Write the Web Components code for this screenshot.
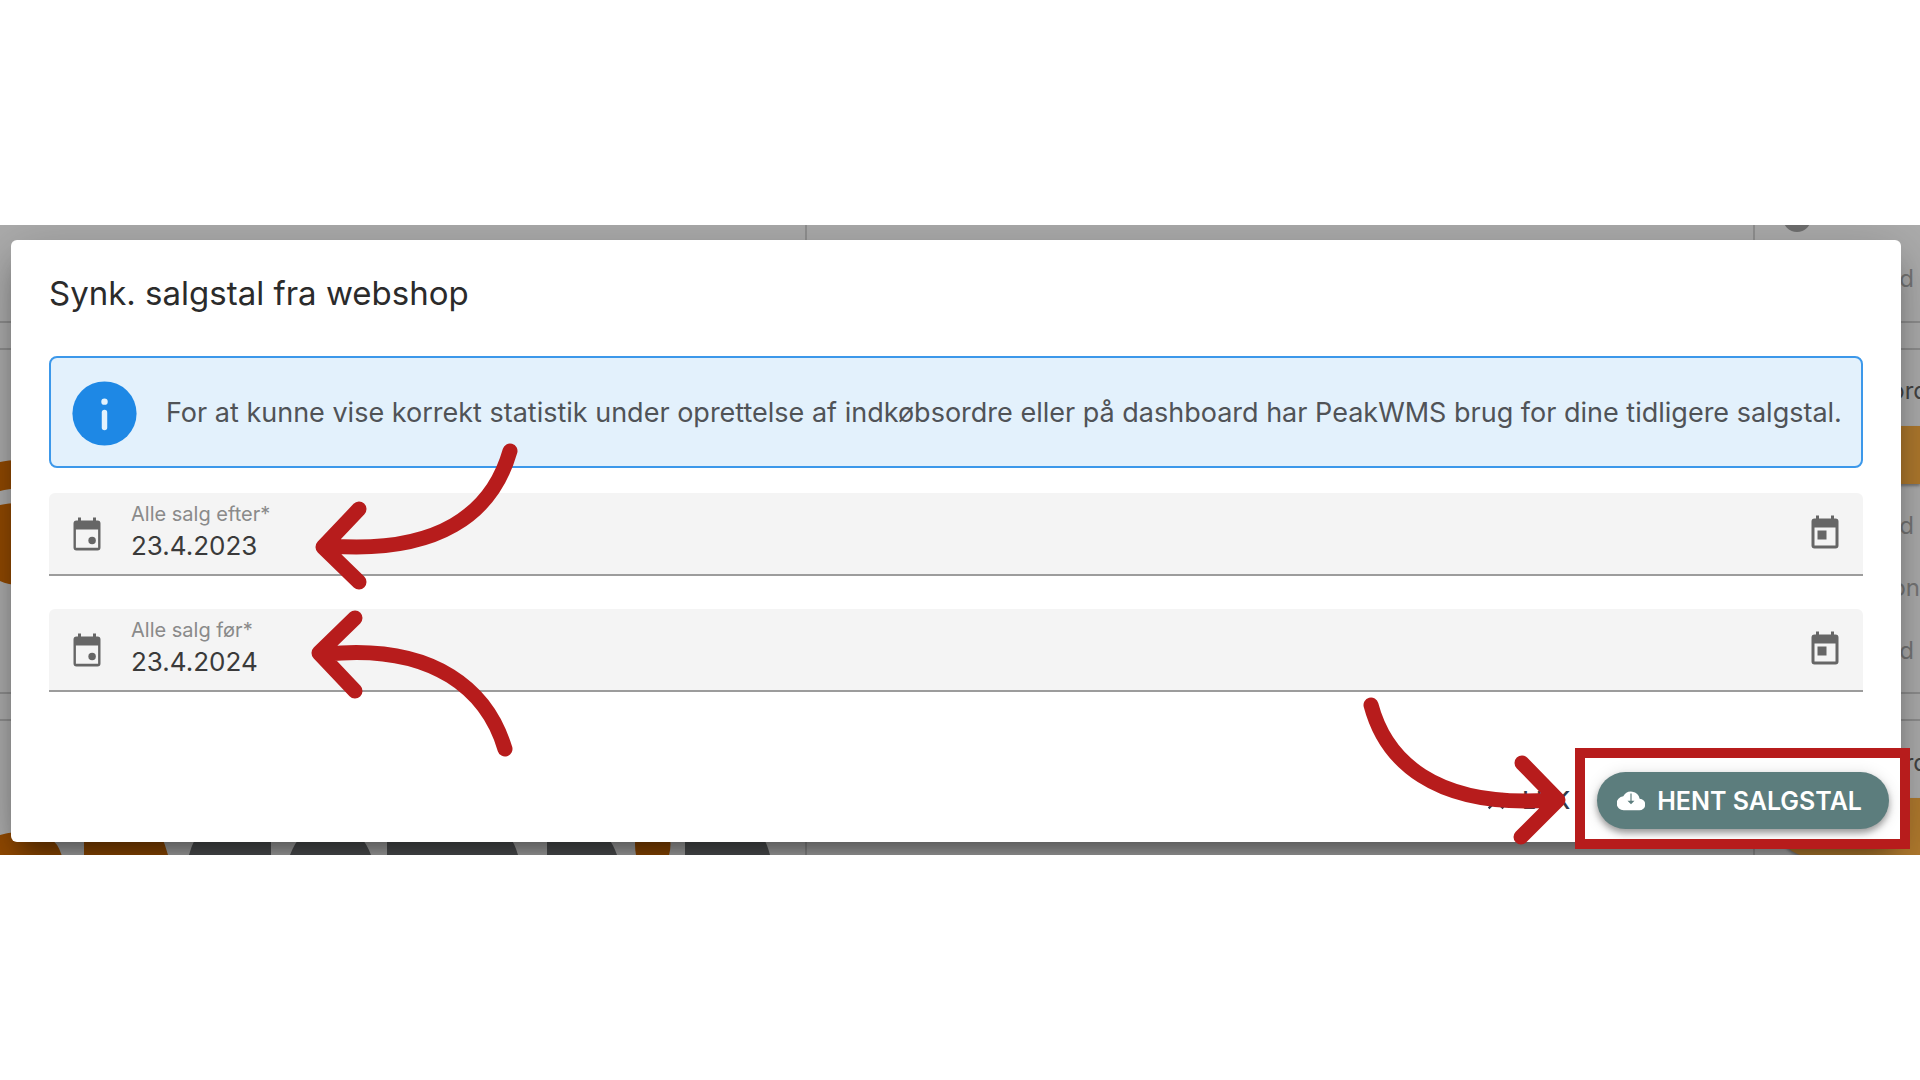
<!DOCTYPE html>
<html lang="da">
<head>
<meta charset="utf-8">
<title>Synk. salgstal fra webshop</title>
<style>
  body {
    margin: 0;
    min-height: 100vh;
    display: flex;
    flex-direction: column;
    justify-content: center;
    background: #fff;
    color: #2b2b2b;
    font-family: Inter, Roboto, sans-serif;
  }
</style>
</head>
<body>
<wms-stage>
  <wms-backdrop slot="backdrop"></wms-backdrop>
  <wms-dialog heading="Synk. salgstal fra webshop">
    <wms-alert>For at kunne vise korrekt statistik under oprettelse af indkøbsordre eller på dashboard har PeakWMS brug for dine tidligere salgstal.</wms-alert>
    <wms-date-field label="Alle salg efter*" value="23.4.2023"></wms-date-field>
    <wms-date-field label="Alle salg før*" value="23.4.2024"></wms-date-field>
    <wms-button slot="actions" variant="text" icon="close">LUK</wms-button>
    <wms-button slot="actions" variant="primary" icon="cloud" marked>HENT SALGSTAL</wms-button>
  </wms-dialog>
  <wms-arrow slot="notes" kind="efter"></wms-arrow>
  <wms-arrow slot="notes" kind="foer"></wms-arrow>
  <wms-arrow slot="notes" kind="hent"></wms-arrow>
</wms-stage>

<script>
const icons = {
  close: '<path d="M19 6.4 17.6 5 12 10.6 6.4 5 5 6.4l5.6 5.6L5 17.6 6.4 19l5.6-5.6 5.6 5.6 1.4-1.4-5.6-5.6z"/>',
  cloud: '<path fill-rule="evenodd" d="M19.4 10A7.5 7.5 0 0 0 5.4 8 6 6 0 0 0 6 20h13a5 5 0 0 0 .4-10zM11.5 5.5h1v6.3h2.5L12 14.8l-3-3h2.5z"/>',
  info: '<path d="M12 2a10 10 0 1 0 0 20 10 10 0 0 0 0-20z"/><path d="M12 11.7v4.7" fill="none" stroke="#e3f2fd" stroke-width="1.7" stroke-linecap="round"/><circle cx="12" cy="8.3" r="1" fill="#e3f2fd"/>',
  event: '<path fill-rule="evenodd" d="M6 1h2v2h8V1h2v2h1a2 2 0 0 1 2 2v16a2 2 0 0 1-2 2H5a2 2 0 0 1-2-2V5a2 2 0 0 1 2-2h1zM4.6 9v12.2h14.8V9z"/><circle cx="15.4" cy="16.3" r="2.5"/>',
  today: '<path fill-rule="evenodd" d="M6 1h2v2h8V1h2v2h1a2 2 0 0 1 2 2v16a2 2 0 0 1-2 2H5a2 2 0 0 1-2-2V5a2 2 0 0 1 2-2h1zM5 9v12h14V9z"/><path d="M7 11h6v6H7z"/>'
};

/**
 * Small fill icon, sized with the --size property.
 */
class WmsIcon extends HTMLElement {
  constructor() {
    super();
    this.attachShadow({ mode: 'open' });
  }

  connectedCallback() {
    this.shadowRoot.innerHTML = `
      <style>
        :host { display: block; flex: none; width: var(--size, 24px); height: var(--size, 24px); }
        svg { display: block; width: 100%; height: 100%; fill: currentColor; }
      </style>
      <svg viewBox="0 0 24 24" aria-hidden="true">${icons[this.getAttribute('name')]}</svg>
    `;
  }
}

/**
 * Holds the page behind, the dialog and the notes on top.
 */
class WmsStage extends HTMLElement {
  constructor() {
    super();
    this.attachShadow({ mode: 'open' }).innerHTML = `
      <style>
        :host { display: block; position: relative; }
        .clip { position: relative; overflow: hidden; padding: 15px 19px 13px 11px; background: #adadad; }
      </style>
      <div class="clip">
        <slot name="backdrop"></slot>
        <slot></slot>
      </div>
      <slot name="notes"></slot>
    `;
  }
}

/**
 * Dimmed dashboard that shows round the edges of the dialog.
 */
class WmsBackdrop extends HTMLElement {
  constructor() {
    super();
    this.attachShadow({ mode: 'open' }).innerHTML = `
      <style>
        :host { position: absolute; inset: 0; font-size: 24px; line-height: 32px; color: #777; }
        svg { position: absolute; left: 0; top: 0; width: 810px; height: 100%; }
        .side { position: absolute; top: 0; bottom: 0; right: 0; width: 165px; border-left: 2px solid #929292; }
        .rule { position: absolute; left: 0; right: 0; height: 25px; border: solid #8f8f8f; border-width: 2px 0; }
        .rule.one { top: 96px; }
        .rule.two { top: 467px; }
        .bar { position: absolute; left: 24px; right: 0; height: 58px; border-radius: 29px 0 0 29px; background: #b07a2e; box-shadow: 0 2px 3px #0005; }
        .dot { position: absolute; left: 28px; top: -21px; width: 28px; height: 28px; border-radius: 50%; background: #707070; }
        span { position: absolute; right: 6px; }
        .dark { color: #444; right: -8px; }
      </style>
      <div class="rule one"></div>
      <div class="rule two"></div>
      <svg aria-hidden="true">
        <g fill="#934a00">
          <path d="M0 237q8-2 20-2v28q-12 1-20 3z"/>
          <path d="M0 280q8-2 20-2v82q-12 0-20-4z"/>
          <path d="M0 610q56-14 63 26H0zM84 600h70q8 8 14 30H84z"/>
          <path d="M636 608h33q3 11 0 22h-33q-2-11 0-22z"/>
        </g>
        <g fill="#505254">
          <path d="M189 630q4-16 14-26h68v26zM290 630q10-26 28-26h28q17 4 25 26z"/>
          <path d="M387 604h62l13 12 14-12h22q14 4 20 26H387zM547 604h50q13 6 20 26h-70zM685 604h70q10 6 15 26h-85z"/>
        </g>
        <path d="M806 0v640" stroke="#929292" stroke-width="2"/>
      </svg>
      <div class="side">
        <div class="dot"></div>
        <div class="bar" style="top: 201px"></div>
        <div class="bar" style="top: 573px"></div>
        <span style="top: 38px">d</span>
        <span class="dark" style="top: 150px">ord</span>
        <span style="top: 285px">d</span>
        <span style="top: 347px; right: 0">on</span>
        <span style="top: 410px">d</span>
        <span class="dark" style="top: 522px">ord</span>
      </div>
    `;
  }
}

class WmsDialog extends HTMLElement {
  constructor() {
    super();
    this.attachShadow({ mode: 'open' });
  }

  connectedCallback() {
    this.shadowRoot.innerHTML = `
      <style>
        :host {
          display: block;
          position: relative;
          background: #fff;
          border-radius: 6px;
          box-shadow: 0 18px 24px -10px #0007, 0 12px 60px 6px #0003;
        }
        h1 { margin: 0; padding: 33px 38px 43px; font-size: 33px; line-height: 40px; font-weight: 400; }
        .body { display: flex; flex-direction: column; gap: 33px; padding: 0 38px; }
        ::slotted(wms-alert) { margin-bottom: -8px; }
        .actions { display: flex; justify-content: flex-end; align-items: center; gap: 27px; padding: 80px 12px 13px; }
      </style>
      <section role="dialog" aria-labelledby="heading">
        <h1 id="heading">${this.getAttribute('heading')}</h1>
        <div class="body"><slot></slot></div>
        <div class="actions"><slot name="actions"></slot></div>
      </section>
    `;
  }
}

class WmsAlert extends HTMLElement {
  constructor() {
    super();
    this.attachShadow({ mode: 'open' }).innerHTML = `
      <style>
        :host {
          display: flex;
          align-items: center;
          gap: 30px;
          box-sizing: border-box;
          min-height: 112px;
          padding: 16px 14px 14px 22px;
          border: 2px solid #3c98ea;
          border-radius: 8px;
          background: #e3f1fc;
          color: #505357;
          font-size: 27px;
          line-height: 32px;
        }
        wms-icon { --size: 77px; margin: -7px; color: #1e88e5; }
        p { margin: 0; }
      </style>
      <wms-icon name="info"></wms-icon>
      <p><slot></slot></p>
    `;
  }
}

/**
 * Filled text field with a calendar icon at each end.
 */
class WmsDateField extends HTMLElement {
  constructor() {
    super();
    this.attachShadow({ mode: 'open' });
  }

  connectedCallback() {
    this.shadowRoot.innerHTML = `
      <style>
        :host { display: block; }
        .field {
          display: flex;
          align-items: center;
          box-sizing: border-box;
          height: 83px;
          padding: 0 20px;
          background: #f4f4f4;
          border-bottom: 2px solid #9c9c9c;
          border-radius: 6px 6px 0 0;
        }
        .text { flex: 1; display: flex; flex-direction: column; padding: 0 0 4px 26px; }
        label { font-size: 20px; line-height: 28px; color: #8a8a8a; }
        input {
          width: 100%;
          padding: 0;
          border: 0;
          outline: 0;
          background: none;
          font: inherit;
          font-size: 26px;
          line-height: 36px;
          height: 36px;
          color: #3a3a3a;
        }
        button { padding: 0 0 4px; border: 0; background: none; cursor: pointer; }
        wms-icon { --size: 36px; color: #666; }
      </style>
      <div class="field">
        <wms-icon name="event"></wms-icon>
        <div class="text">
          <label for="date">${this.getAttribute('label')}</label>
          <input id="date" type="text" value="${this.getAttribute('value')}">
        </div>
        <button type="button" aria-label="Vælg dato"><wms-icon name="today"></wms-icon></button>
      </div>
    `;
  }
}

class WmsButton extends HTMLElement {
  constructor() {
    super();
    this.attachShadow({ mode: 'open' });
  }

  connectedCallback() {
    this.shadowRoot.innerHTML = `
      <style>
        :host { display: block; position: relative; }
        button {
          display: flex;
          align-items: center;
          gap: 12px;
          height: 57px;
          padding: 0;
          border: 0;
          border-radius: 29px;
          background: none;
          color: #2f3a4a;
          font: inherit;
          font-size: 24px;
          font-weight: 500;
          white-space: nowrap;
          cursor: pointer;
        }
        wms-icon { --size: 28px; }
        :host([variant="primary"]) button {
          padding: 0 27px 0 20px;
          background: #5c7d7d;
          color: #fff;
          font-size: 25px;
          font-weight: 600;
          box-shadow: 0 4px 6px #0005, 0 2px 16px #0002;
        }
        .mark { display: none; }
        :host([marked]) .mark {
          display: block;
          position: absolute;
          inset: -24px -21px -20px -22px;
          border: 10px solid #b71c1c;
          pointer-events: none;
        }
      </style>
      <button type="button"><wms-icon name="${this.getAttribute('icon')}"></wms-icon><slot></slot></button>
      <div class="mark"></div>
    `;
  }
}

const arrows = {
  efter: {
    box: 'left: 310px; top: 215px; width: 215px; height: 160px',
    view: '310 440 215 160',
    d: 'M510 451C492 514 438 554 330 546M359 509 323 547 359 582'
  },
  foer: {
    box: 'left: 305px; top: 380px; width: 215px; height: 160px',
    view: '305 605 215 160',
    d: 'M505 749C488 692 436 643 326 654M355 618 319 653 355 691'
  },
  hent: {
    box: 'right: 350px; top: 470px; width: 210px; height: 160px',
    view: '1360 695 210 160',
    d: 'M1371 705C1385 758 1432 809 1552 800M1522 763 1558 800 1521 837'
  }
};

/**
 * Hand drawn pointer that lies over the dialog.
 */
class WmsArrow extends HTMLElement {
  constructor() {
    super();
    this.attachShadow({ mode: 'open' });
  }

  connectedCallback() {
    const arrow = arrows[this.getAttribute('kind')];
    this.shadowRoot.innerHTML = `
      <style>
        :host { position: absolute; ${arrow.box}; pointer-events: none; }
        svg { display: block; width: 100%; height: 100%; }
        path { fill: none; stroke: #b71c1c; stroke-width: 15; stroke-linecap: round; stroke-linejoin: round; }
      </style>
      <svg viewBox="${arrow.view}" aria-hidden="true"><path d="${arrow.d}"/></svg>
    `;
  }
}

customElements.define('wms-icon', WmsIcon);
customElements.define('wms-stage', WmsStage);
customElements.define('wms-backdrop', WmsBackdrop);
customElements.define('wms-dialog', WmsDialog);
customElements.define('wms-alert', WmsAlert);
customElements.define('wms-date-field', WmsDateField);
customElements.define('wms-button', WmsButton);
customElements.define('wms-arrow', WmsArrow);
</script>
</body>
</html>
